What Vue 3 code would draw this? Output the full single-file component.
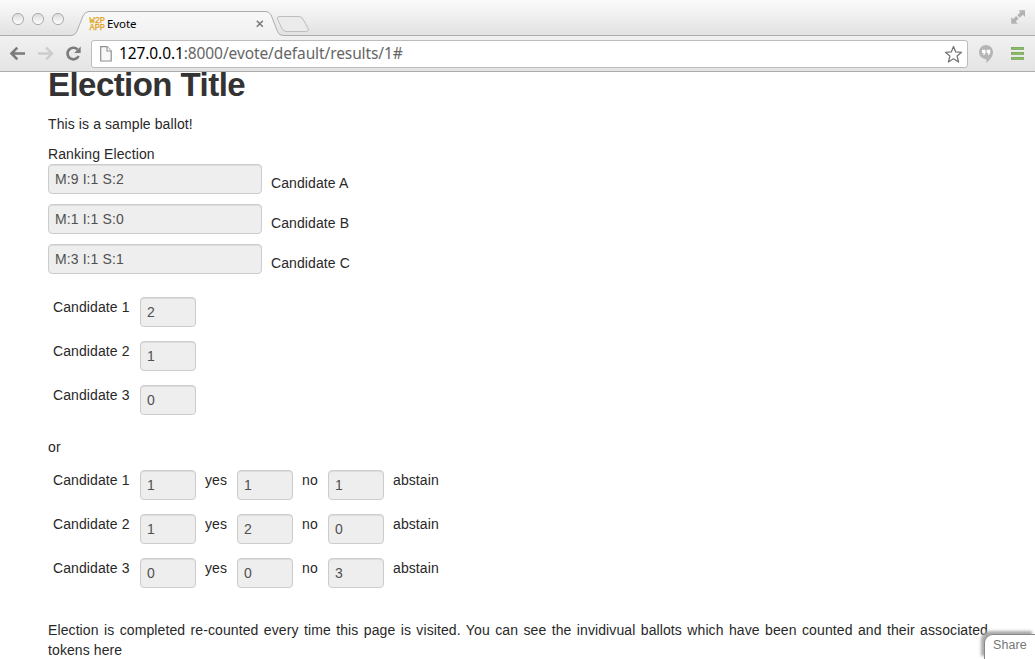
<script setup>
const ranking = [
  { score: 'M:9 I:1 S:2', name: 'Candidate A' },
  { score: 'M:1 I:1 S:0', name: 'Candidate B' },
  { score: 'M:3 I:1 S:1', name: 'Candidate C' },
]
const simple = [
  { name: 'Candidate 1', votes: '2' },
  { name: 'Candidate 2', votes: '1' },
  { name: 'Candidate 3', votes: '0' },
]
const approval = [
  { name: 'Candidate 1', yes: '1', no: '1', abstain: '1' },
  { name: 'Candidate 2', yes: '1', no: '2', abstain: '0' },
  { name: 'Candidate 3', yes: '0', no: '0', abstain: '3' },
]
</script>

<template>
  <div class="window">
    <header class="chrome">
      <div class="tabstrip">
        <svg class="frame" width="1035" height="36" viewBox="0 0 1035 36">
          <defs>
            <linearGradient id="light" x1="0" y1="0" x2="0" y2="1">
              <stop offset="0" stop-color="#d9d9d9" />
              <stop offset="1" stop-color="#fff" />
            </linearGradient>
            <linearGradient id="tab" x1="0" y1="0" x2="0" y2="1">
              <stop offset="0" stop-color="#f8f8f8" />
              <stop offset="1" stop-color="#f1f1f1" />
            </linearGradient>
          </defs>
          <g fill="url(#light)" stroke="#adadad">
            <circle cx="18" cy="19" r="5.6" />
            <circle cx="38" cy="19" r="5.6" />
            <circle cx="58" cy="19" r="5.6" />
          </g>
          <path d="M0 35.500H71Q75 35.500 76.800 31.500L83 16Q85 11.500 89 11.500H265Q269.500 11.500 271.500 16L277.500 31.500Q279 35.500 283 35.500H1035V36H0Z" fill="url(#tab)" />
          <path d="M0 35.500H71Q75 35.500 76.800 31.500L83 16Q85 11.500 89 11.500H265Q269.500 11.500 271.500 16L277.500 31.500Q279 35.500 283 35.500H1035" fill="none" stroke="#adadad" />
          <path d="M280 16.500H299Q302 16.500 303.200 19.500L308 28.500Q309 31.500 305.500 31.500H286Q283.500 31.500 282 28.500L277.500 19Q276.500 16.500 280 16.500Z" fill="#ebebeb" stroke="#bdbdbd" />
          <path d="M256.800 20.800l6 6m0-6l-6 6" stroke="#777" stroke-width="1.500" />
          <g fill="#b2b2b2">
            <path d="M1018.500 10.200H1025V17l-2.200-2.200-3 3-2.500-2.500 3-3Z" />
            <path d="M1011.200 17.200v6.500h6.600l-2.200-2.200 3-3-2.500-2.500-2.800 3Z" />
          </g>
          <text class="logo" x="89.500" y="23" textLength="15.500" lengthAdjust="spacingAndGlyphs">W2P</text>
          <text class="logo" x="89.500" y="30" textLength="15.500" lengthAdjust="spacingAndGlyphs">APP</text>
        </svg>
        <span class="tab-title">Evote</span>
      </div>
      <div class="toolbar">
        <svg class="nav" width="91" height="35" viewBox="0 36 91 35" fill="none">
          <path d="M25 53.500H12M17.300 47.700L11.500 53.500L17.300 59.300" stroke="#7b7b7b" stroke-width="2.600" />
          <path d="M38 53.500H51M46.200 47.700L52 53.500L46.200 59.300" stroke="#cdcdcd" stroke-width="2.400" />
          <path d="M77.500 49.500A5.800 5.800 0 1 0 78.600 56" stroke="#7b7b7b" stroke-width="2.600" />
          <path d="M80.700 46.500V53H74.200Z" fill="#7b7b7b" />
        </svg>
        <div class="omnibox">
          <svg class="page-icon" width="12" height="16" viewBox="0 0 12 16">
            <path d="M.7.700H7L11.200 5V15H.7Z" fill="#f8f8f8" stroke="#909090" stroke-width="1.200" />
            <path d="M7 .7V5h4.200" fill="#fff" stroke="#909090" stroke-width="1.100" />
          </svg>
          <span class="url"><b>127.0.0.1</b>:8000/evote/default/results/1#</span>
          <svg class="star" width="19" height="19" viewBox="0 0 19 19">
            <path d="M9.500 1.400L11.700 6.900L17.600 7.300L13.100 11.100L14.600 17L9.500 13.800L4.400 17L5.900 11.100L1.400 7.300L7.300 6.900Z" fill="#fff" stroke="#777" stroke-width="1.300" stroke-linejoin="round" />
          </svg>
        </div>
        <svg class="tools" width="67" height="35" viewBox="968 36 67 35">
          <path d="M986 45a7 7 0 0 1 7 7c0 4.500-3 8-6.700 10.800V59.200H986a7.100 7.100 0 0 1 0-14.200Z" fill="#b5b5b5" />
          <path d="M982 49.800h3.500v3.500l-1.300 1.700h-1l.5-2H982Zm4.700 0h3.500v3.500L988.900 55h-1l.5-2h-1.700Z" fill="#fff" />
          <g fill="#88bd62" stroke="#6d9c50" stroke-width=".6">
            <rect x="1011.300" y="47.300" width="12.400" height="2.200" />
            <rect x="1011.300" y="52.300" width="12.400" height="2.200" />
            <rect x="1011.300" y="57.300" width="12.400" height="2.200" />
          </g>
        </svg>
      </div>
    </header>

    <main class="page">
      <h1>Election Title</h1>
      <p class="intro">This is a sample ballot!</p>
      <div class="heading">Ranking Election</div>
      <div v-for="r in ranking" :key="r.name" class="rank">
        <div class="field">{{ r.score }}</div>
        <span>{{ r.name }}</span>
      </div>
      <section class="simple">
        <div v-for="s in simple" :key="s.name" class="row">
          <span>{{ s.name }}</span><div class="field">{{ s.votes }}</div>
        </div>
      </section>
      <p class="or">or</p>
      <section class="approval">
        <div v-for="a in approval" :key="a.name" class="row">
          <span>{{ a.name }}</span>
          <div class="field">{{ a.yes }}</div><span>yes</span>
          <div class="field">{{ a.no }}</div><span>no</span>
          <div class="field">{{ a.abstain }}</div><span>abstain</span>
        </div>
      </section>
      <p class="note">Election is completed re-counted every time this page is visited. You can see the invidivual ballots which have been counted and their associated tokens here</p>
    </main>
    <div class="share">Share</div>
  </div>
</template>

<style>
body { margin: 0; background: #fff; overflow: hidden; }
</style>

<style scoped>
* { box-sizing: border-box; }
.window { position: relative; width: 1035px; height: 659px; overflow: hidden; display: flex; flex-direction: column; background: #fff; font: 14px/20px "Liberation Sans", Arial, sans-serif; letter-spacing: .1px; color: #282828; }
.chrome { flex: none; height: 72px; border-bottom: 1px solid #acacac; }
.tabstrip { position: relative; height: 36px; padding: 14px 0 0 107px; background: linear-gradient(#fbfbfb, #e1e1e1); }
.frame { position: absolute; left: 0; top: 0; }
.logo { font: 9px "Liberation Mono", monospace; letter-spacing: 0; fill: #e0a010; stroke: #e0a010; stroke-width: .25px; }
.tab-title { position: relative; display: block; font: 11.500px/20px "Noto Sans", sans-serif; color: #000; letter-spacing: -.1px; }
.toolbar { display: flex; align-items: flex-start; height: 35px; background: linear-gradient(#f1f1f1, #e4e4e4); }
.nav, .tools { flex: none; display: block; }
.omnibox { display: flex; align-items: center; width: 877px; height: 28px; margin-top: 4px; padding: 0 4px 0 8px; background: #fff; border: 1px solid #bcbcbc; border-radius: 3px; }
.url { margin-left: 7px; margin-top: -2px; font: 15.500px/24px "Noto Sans", sans-serif; letter-spacing: -.1px; color: #666; white-space: nowrap; }
.url b { font-weight: 400; color: #000; }
.star { margin-left: auto; }
.page { flex: 1; min-height: 0; padding: 0 47px 0 48px; }
h1 { margin: 0; height: 42px; font-size: 33px; line-height: 26px; letter-spacing: -.55px; color: #333; }
p { margin: 0; }
.intro { height: 30px; }
.heading { height: 20px; }
.rank { display: flex; gap: 9px; height: 40px; }
.rank .field { width: 214px; }
.rank span { padding-top: 9px; }
.field { height: 30px; padding: 4px 6px; border: 1px solid #ccc; border-radius: 4px; background: #eee; box-shadow: inset 0 1px 1px rgba(0, 0, 0, .075); color: #505050; }
.simple { padding: 13px 0 0 5px; }
.row { display: grid; grid-template-columns: 87px 56px; height: 44px; align-items: start; }
.approval .row { grid-template-columns: 87px 65px 32px 65px 26px 65px auto; }
.row .field { width: 56px; }
.or { padding: 8px 0 13px; }
.approval { padding-left: 5px; }
.note { margin-top: 18px; text-align: justify; }
.share { position: absolute; right: 0; bottom: 0; width: 51px; height: 25px; padding-left: 8px; border: 1px solid #888; border-width: 1px 0 0 1px; border-radius: 9px 0 0; background: #fff; box-shadow: -3px -3px 3px #aaa; font-size: 12.500px; line-height: 20px; color: #777; }
</style>
